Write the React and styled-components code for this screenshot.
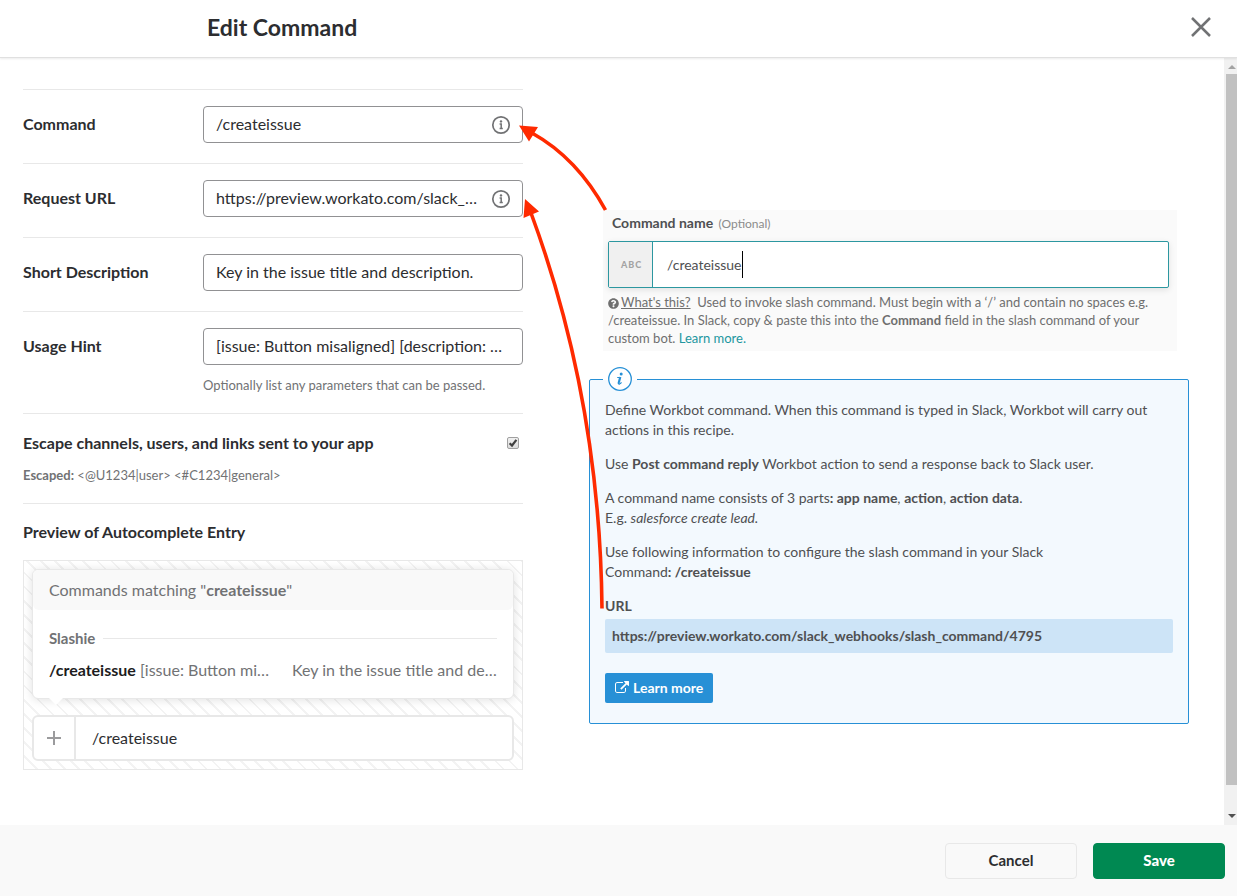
import React from "react";
import styled, { createGlobalStyle } from "styled-components";
import { FaQuestionCircle } from "react-icons/fa";

const GlobalStyle = createGlobalStyle`
  *, *::before, *::after { box-sizing: border-box; }
  body { margin: 0; background: #fff; font-family: Lato, "Liberation Sans", sans-serif; }
  p, h1, h2 { margin: 0; }
  input, button { font-family: inherit; margin: 0; }
`;

const Page = styled.div`
  display: flex;
  flex-direction: column;
  min-height: 100vh;
  color: #2c2d30;
  font-size: 16px;
`;

const Header = styled.header`
  position: relative;
  z-index: 1;
  display: flex;
  align-items: center;
  justify-content: space-between;
  height: 58px;
  padding: 0 24px 4px 207px;
  border-bottom: 1px solid #e0e0e0;
  box-shadow: 0 1px 2px rgba(0, 0, 0, 0.08);
`;

const Title = styled.h1`
  font-size: 23px;
  line-height: 30px;
  font-weight: 700;
`;

const CloseButton = styled.button`
  display: flex;
  padding: 0;
  border: 0;
  background: none;
  color: #717274;
`;

const Body = styled.div`
  position: relative;
  display: flex;
  flex: 1;
`;

const Main = styled.main`
  display: flex;
  flex: 1;
  min-width: 0;
  gap: 66px;
  padding: 31px 35px 55px 23px;
`;

const Form = styled.form`
  flex: 0 1 500px;
  min-width: 0;
`;

const Row = styled.div`
  display: grid;
  grid-template-columns: 180px 1fr;
  padding: 16px 0 20px;
  border-top: 1px solid #e8e8e8;
`;

const Label = styled.label`
  font-weight: 700;
  font-size: 16px;
  line-height: 36px;
`;

const FieldBox = styled.div`
  display: flex;
  align-items: center;
  height: 37px;
  padding: 0 11px 0 12px;
  gap: 12px;
  border: 1px solid #919193;
  border-radius: 4px;
`;

const FieldInput = styled.input`
  flex: 1;
  min-width: 0;
  padding: 0 0 2px;
  border: 0;
  outline: 0;
  background: none;
  color: #2c2d30;
  font-size: 16px;
  line-height: 24px;
  text-overflow: ellipsis;
`;

const Hint = styled.p`
  grid-column: 2;
  padding-top: 12px;
  color: #717274;
  font-size: 13px;
  line-height: 16px;
`;

const EscapeSection = styled.div`
  padding: 17px 0 18px;
  border-top: 1px solid #e8e8e8;
`;

const EscapeHead = styled.div`
  display: flex;
  align-items: center;
  justify-content: space-between;
  padding-right: 4px;
`;

const SectionLabel = styled.label`
  font-weight: 700;
  font-size: 16px;
  line-height: 24px;
`;

const EscapeNote = styled.p`
  padding-top: 10px;
  color: #717274;
  font-size: 13px;
  line-height: 20px;
`;

const CheckWrap = styled.span`
  display: grid;
  > * { grid-area: 1 / 1; }
  svg { pointer-events: none; }
`;

const Checkbox = styled.input`
  appearance: none;
  width: 12px;
  height: 12px;
  border: 1px solid #a0a0a0;
  border-radius: 2px;
  background: linear-gradient(#f0f0f0, #dcdcdc);
`;

const PreviewSection = styled.section`
  padding-top: 16px;
  border-top: 1px solid #e8e8e8;
`;

const PreviewTitle = styled.h2`
  font-size: 16px;
  line-height: 24px;
  font-weight: 700;
`;

const PreviewFrame = styled.div`
  display: flex;
  flex-direction: column;
  gap: 16px;
  margin-top: 16px;
  padding: 8px;
  border: 1px solid #e8e8e8;
  background: repeating-linear-gradient(45deg, #fff 0 8px, #f3f3f3 8px 10px);
`;

const Suggestions = styled.div`
  position: relative;
  border: 1px solid #e8e8e8;
  border-radius: 6px;
  background: #fff;
  box-shadow: 0 1px 10px rgba(0, 0, 0, 0.12);
  color: #717274;
  font-size: 16px;
  line-height: 24px;

  &::after {
    content: "";
    position: absolute;
    top: 100%;
    left: 16px;
    border: 7px solid transparent;
    border-top-color: #fff;
    border-bottom: 0;
  }
`;

const SuggestionsHead = styled.div`
  padding: 8px 16px;
  border-radius: 6px;
  background: #f9f9f9;
`;

const SuggestionsBody = styled.div`
  padding: 16px;
`;

const GroupName = styled.div`
  display: flex;
  align-items: center;
  gap: 8px;
  font-size: 15px;
  font-weight: 700;

  &::after {
    content: "";
    flex: 1;
    height: 1px;
    background: #e8e8e8;
  }
`;

const Match = styled.div`
  display: grid;
  grid-template-columns: 221px 1fr;
  gap: 22px;
  padding-top: 8px;
`;

const Clipped = styled.span`
  overflow: hidden;
  white-space: nowrap;
  text-overflow: ellipsis;
  b { color: #1d1c1d; }
`;

const Composer = styled.div`
  display: flex;
  height: 46px;
  border: 2px solid #e8e8e8;
  border-radius: 6px;
  background: #fff;
`;

const AddButton = styled.button`
  display: flex;
  align-items: center;
  justify-content: center;
  width: 42px;
  padding: 0;
  border: 0;
  border-right: 2px solid #e8e8e8;
  background: none;
  color: #9b9b9d;
`;

const ComposerInput = styled(FieldInput)`
  padding: 0 16px;
`;

const Aside = styled.aside`
  flex: 1;
  min-width: 0;
  padding-top: 121px;
  color: #4f5052;
`;

const NameCard = styled.div`
  margin: 0 12px 28px 14px;
  padding: 3px 8px 0 5px;
  background: #fafafa;
`;

const NameLabel = styled.label`
  display: block;
  padding: 0 4px 7px;
  font-size: 14px;
  line-height: 20px;
  font-weight: 700;

  small {
    padding-left: 2px;
    color: #8b8b8b;
    font-size: 12px;
    font-weight: 400;
  }
`;

const NameField = styled.div`
  display: flex;
  align-items: center;
  height: 47px;
  border: 1px solid #2c97a0;
  border-radius: 2px;
  background: #fff;
  box-shadow: 0 2px 6px rgba(0, 0, 0, 0.1);
`;

const TypeTag = styled.span`
  display: flex;
  align-items: center;
  justify-content: center;
  align-self: stretch;
  width: 44px;
  margin-right: 14px;
  padding-left: 2px;
  border-right: 1px solid #2c97a0;
  background: #f0f0f0;
  color: #a3a3a3;
  font-size: 9px;
  font-weight: 900;
  letter-spacing: 1px;
`;

const NameInput = styled.input`
  field-sizing: content;
  padding: 0;
  border: 0;
  outline: 0;
  background: none;
  color: #4f5052;
  font-size: 14px;
  line-height: 20px;
`;

const Caret = styled.span`
  width: 1px;
  height: 27px;
  background: #000;
`;

const NameHelp = styled.p`
  padding: 5px 0 4px;
  color: #6f6f6f;
  font-size: 13px;
  line-height: 18px;

  svg { vertical-align: -2px; margin-right: 2px; }
`;

const TextLink = styled.a`
  color: ${(p) => (p.$plain ? "inherit" : "#21969f")};
  text-decoration: ${(p) => (p.$plain ? "underline" : "none")};
`;

const InfoBox = styled.section`
  position: relative;
  display: flex;
  flex-direction: column;
  align-items: flex-start;
  padding: 20px 15px;
  border: 1px solid #2790d6;
  border-radius: 2px;
  background: #f3f9fe;
  font-size: 14px;
  line-height: 20px;
`;

const Badge = styled.span`
  position: absolute;
  top: -13px;
  left: 13px;
  display: flex;
  padding: 0 5px;
  background: linear-gradient(#fff 13px, #f3f9fe 13px);
`;

const Paragraph = styled.p`
  padding-bottom: 14px;
`;

const UrlLabel = styled.div`
  padding-bottom: 3px;
  font-weight: 700;
`;

const UrlValue = styled.div`
  width: 100%;
  margin-bottom: 20px;
  padding: 7px;
  border-radius: 2px;
  background: #cde4f7;
  font-weight: 700;
`;

const LearnMore = styled.a`
  display: flex;
  align-items: center;
  gap: 4px;
  height: 30px;
  padding: 0 10px;
  border-radius: 2px;
  background: #2790d6;
  color: #fff;
  font-weight: 700;
  text-decoration: none;
`;

const Scrollbar = styled.div`
  display: flex;
  flex-direction: column;
  align-items: center;
  width: 13px;
  padding-left: 2px;
  background: #f1f1f1;
`;

const Thumb = styled.div`
  flex: 1;
  align-self: stretch;
  margin: 5px 0 29px;
  background: #c1c1c1;
`;

const Arrow = styled.span`
  border: 4px solid transparent;
  ${(p) => p.$up
    ? "border-top: 0; border-bottom-color: #a3a3a3; margin-top: 7px;"
    : "border-bottom: 0; border-top-color: #505050; margin-bottom: 7px;"}
`;

const Arrows = styled.svg`
  position: absolute;
  top: 0;
  left: 0;
  pointer-events: none;
`;

const Footer = styled.footer`
  display: flex;
  justify-content: flex-end;
  gap: 16px;
  padding: 18px 12px 17px;
  background: #f9f9f9;
`;

const Button = styled.button`
  width: 132px;
  height: 36px;
  padding: 0 0 2px;
  border: 1px solid ${(p) => (p.$primary ? "#008952" : "#e8e8e8")};
  border-radius: 4px;
  background: ${(p) => (p.$primary ? "#008952" : "#f9f9f9")};
  color: ${(p) => (p.$primary ? "#fff" : "#2c2d30")};
  font-size: 15px;
  font-weight: ${(p) => (p.$primary ? 900 : 700)};
`;

function InfoIcon() {
  return (
    <svg width="20" height="20" viewBox="0 0 20 20" fill="none" stroke="#717274" aria-hidden="true">
      <circle cx="10" cy="10" r="8.2" strokeWidth="1.7" />
      <path d="M8.6 9h1.6v4.4M8.6 13.6h3.2" strokeWidth="1.5" />
      <circle cx="10" cy="6.4" r="1.2" fill="#717274" stroke="none" />
    </svg>
  );
}

function Field({ id, label, value, info, hint }) {
  return (
    <Row>
      <Label htmlFor={id}>{label}</Label>
      <FieldBox>
        <FieldInput id={id} type="text" defaultValue={value} />
        {info && <InfoIcon />}
      </FieldBox>
      {hint && <Hint>{hint}</Hint>}
    </Row>
  );
}

export default function App() {
  return (
    <Page>
      <GlobalStyle />
      <Header>
        <Title>Edit Command</Title>
        <CloseButton type="button" aria-label="Close">
          <svg width="24" height="24" viewBox="0 0 24 24" fill="none" stroke="currentColor" strokeWidth="2.5">
            <path d="M3 3l18 18M21 3L3 21" />
          </svg>
        </CloseButton>
      </Header>
      <Body>
        <Main>
          <Form>
            <Field id="command" label="Command" value="/createissue" info />
            <Field id="url" label="Request URL" value="https://preview.workato.com/slack_webhooks/slash_command/4795" info />
            <Field id="description" label="Short Description" value="Key in the issue title and description." />
            <Field
              id="usage"
              label="Usage Hint"
              value="[issue: Button misaligned] [description: Misaligned button]"
              hint="Optionally list any parameters that can be passed."
            />
            <EscapeSection>
              <EscapeHead>
                <SectionLabel htmlFor="escape">Escape channels, users, and links sent to your app</SectionLabel>
                <CheckWrap>
                  <Checkbox id="escape" type="checkbox" defaultChecked />
                  <svg width="12" height="12" viewBox="0 0 12 12" fill="none" stroke="#404040" strokeWidth="2.2" aria-hidden="true">
                    <path d="M2.6 6.2L5 8.5L9.4 2.8" />
                  </svg>
                </CheckWrap>
              </EscapeHead>
              <EscapeNote><b>Escaped:</b> &lt;@U1234|user&gt; &lt;#C1234|general&gt;</EscapeNote>
            </EscapeSection>
            <PreviewSection>
              <PreviewTitle>Preview of Autocomplete Entry</PreviewTitle>
              <PreviewFrame>
                <Suggestions>
                  <SuggestionsHead>Commands matching "<b>createissue</b>"</SuggestionsHead>
                  <SuggestionsBody>
                    <GroupName>Slashie</GroupName>
                    <Match>
                      <Clipped><b>/createissue</b> [issue: Button misaligned]</Clipped>
                      <Clipped>Key in the issue title and description.</Clipped>
                    </Match>
                  </SuggestionsBody>
                </Suggestions>
                <Composer>
                  <AddButton type="button" aria-label="Add">
                    <svg width="16" height="16" viewBox="0 0 16 16" stroke="currentColor" strokeWidth="2">
                      <path d="M8 1v14M1 8h14" />
                    </svg>
                  </AddButton>
                  <ComposerInput type="text" aria-label="Message" defaultValue="/createissue" />
                </Composer>
              </PreviewFrame>
            </PreviewSection>
          </Form>
          <Aside>
            <NameCard>
              <NameLabel htmlFor="name">Command name <small>(Optional)</small></NameLabel>
              <NameField>
                <TypeTag>ABC</TypeTag>
                <NameInput id="name" type="text" defaultValue="/createissue" />
                <Caret />
              </NameField>
              <NameHelp>
                <FaQuestionCircle size={11} /><TextLink href="#help" $plain>What's this?</TextLink>&nbsp; Used to invoke slash
                command. Must begin with a ‘/’ and contain no spaces e.g. /createissue. In Slack, copy &amp; paste this into
                the <b>Command</b> field in the slash command of your custom bot. <TextLink href="#more">Learn more.</TextLink>
              </NameHelp>
            </NameCard>
            <InfoBox>
              <Badge>
                <svg width="24" height="24" viewBox="0 0 24 24" fill="none" stroke="#2790d6" aria-hidden="true">
                  <circle cx="12" cy="12" r="11.3" fill="#fff" strokeWidth="1.3" />
                  <path d="M9.2 10.5h1.8" strokeWidth="1.2" />
                  <path d="M12.3 10l-1.5 5.4q-.3 1.5.8 1.2" strokeWidth="2.2" />
                  <path d="M11.3 16.8q1.2-.1 2.2-1.5" strokeWidth="1.2" />
                  <circle cx="13.2" cy="6.9" r="1.5" fill="#2790d6" stroke="none" />
                </svg>
              </Badge>
              <Paragraph>Define Workbot command. When this command is typed in Slack, Workbot will carry out actions in this recipe.</Paragraph>
              <Paragraph>Use <b>Post command reply</b> Workbot action to send a response back to Slack user.</Paragraph>
              <Paragraph>
                A command name consists of 3 parts<b>: app name</b>, <b>action</b>, <b>action data</b>.<br />
                E.g. <i>salesforce create lead.</i>
              </Paragraph>
              <Paragraph>
                Use following information to configure the slash command in your Slack<br />
                Command<b>: /createissue</b>
              </Paragraph>
              <UrlLabel>URL</UrlLabel>
              <UrlValue>https://preview.workato.com/slack_webhooks/slash_command/4795</UrlValue>
              <LearnMore href="#docs">
                <svg width="14" height="14" viewBox="0 0 1792 1792" fill="currentColor" aria-hidden="true">
                  <path d="M1408 928v320q0 119-84.5 203.5t-203.5 84.5h-832q-119 0-203.5-84.5t-84.5-203.5v-832q0-119 84.5-203.5t203.5-84.5h704q14 0 23 9t9 23v64q0 14-9 23t-23 9h-704q-66 0-113 47t-47 113v832q0 66 47 113t113 47h832q66 0 113-47t47-113v-320q0-14 9-23t23-9h64q14 0 23 9t9 23zm384-864v512q0 26-19 45t-45 19-45-19l-176-176-652 652q-10 10-23 10t-23-10l-114-114q-10-10-10-23t10-23l652-652-176-176q-19-19-19-45t19-45 45-19h512q26 0 45 19t19 45z" />
                </svg>
                Learn more
              </LearnMore>
            </InfoBox>
          </Aside>
        </Main>
        <Scrollbar aria-hidden="true">
          <Arrow $up />
          <Thumb />
          <Arrow />
        </Scrollbar>
        <Arrows width="640" height="560" viewBox="0 58 640 560" fill="none" stroke="#ff2a00" strokeWidth="3.6" aria-hidden="true">
          <path d="M605.5 210Q577 158 532 133" />
          <path d="M531 213Q600 400 602 608.5" />
          <path d="M519 125.5L538 127L529 141.5ZM525 199L539 211.5L523.5 218Z" fill="#ff2a00" stroke="none" />
        </Arrows>
      </Body>
      <Footer>
        <Button type="button">Cancel</Button>
        <Button type="button" $primary>Save</Button>
      </Footer>
    </Page>
  );
}
